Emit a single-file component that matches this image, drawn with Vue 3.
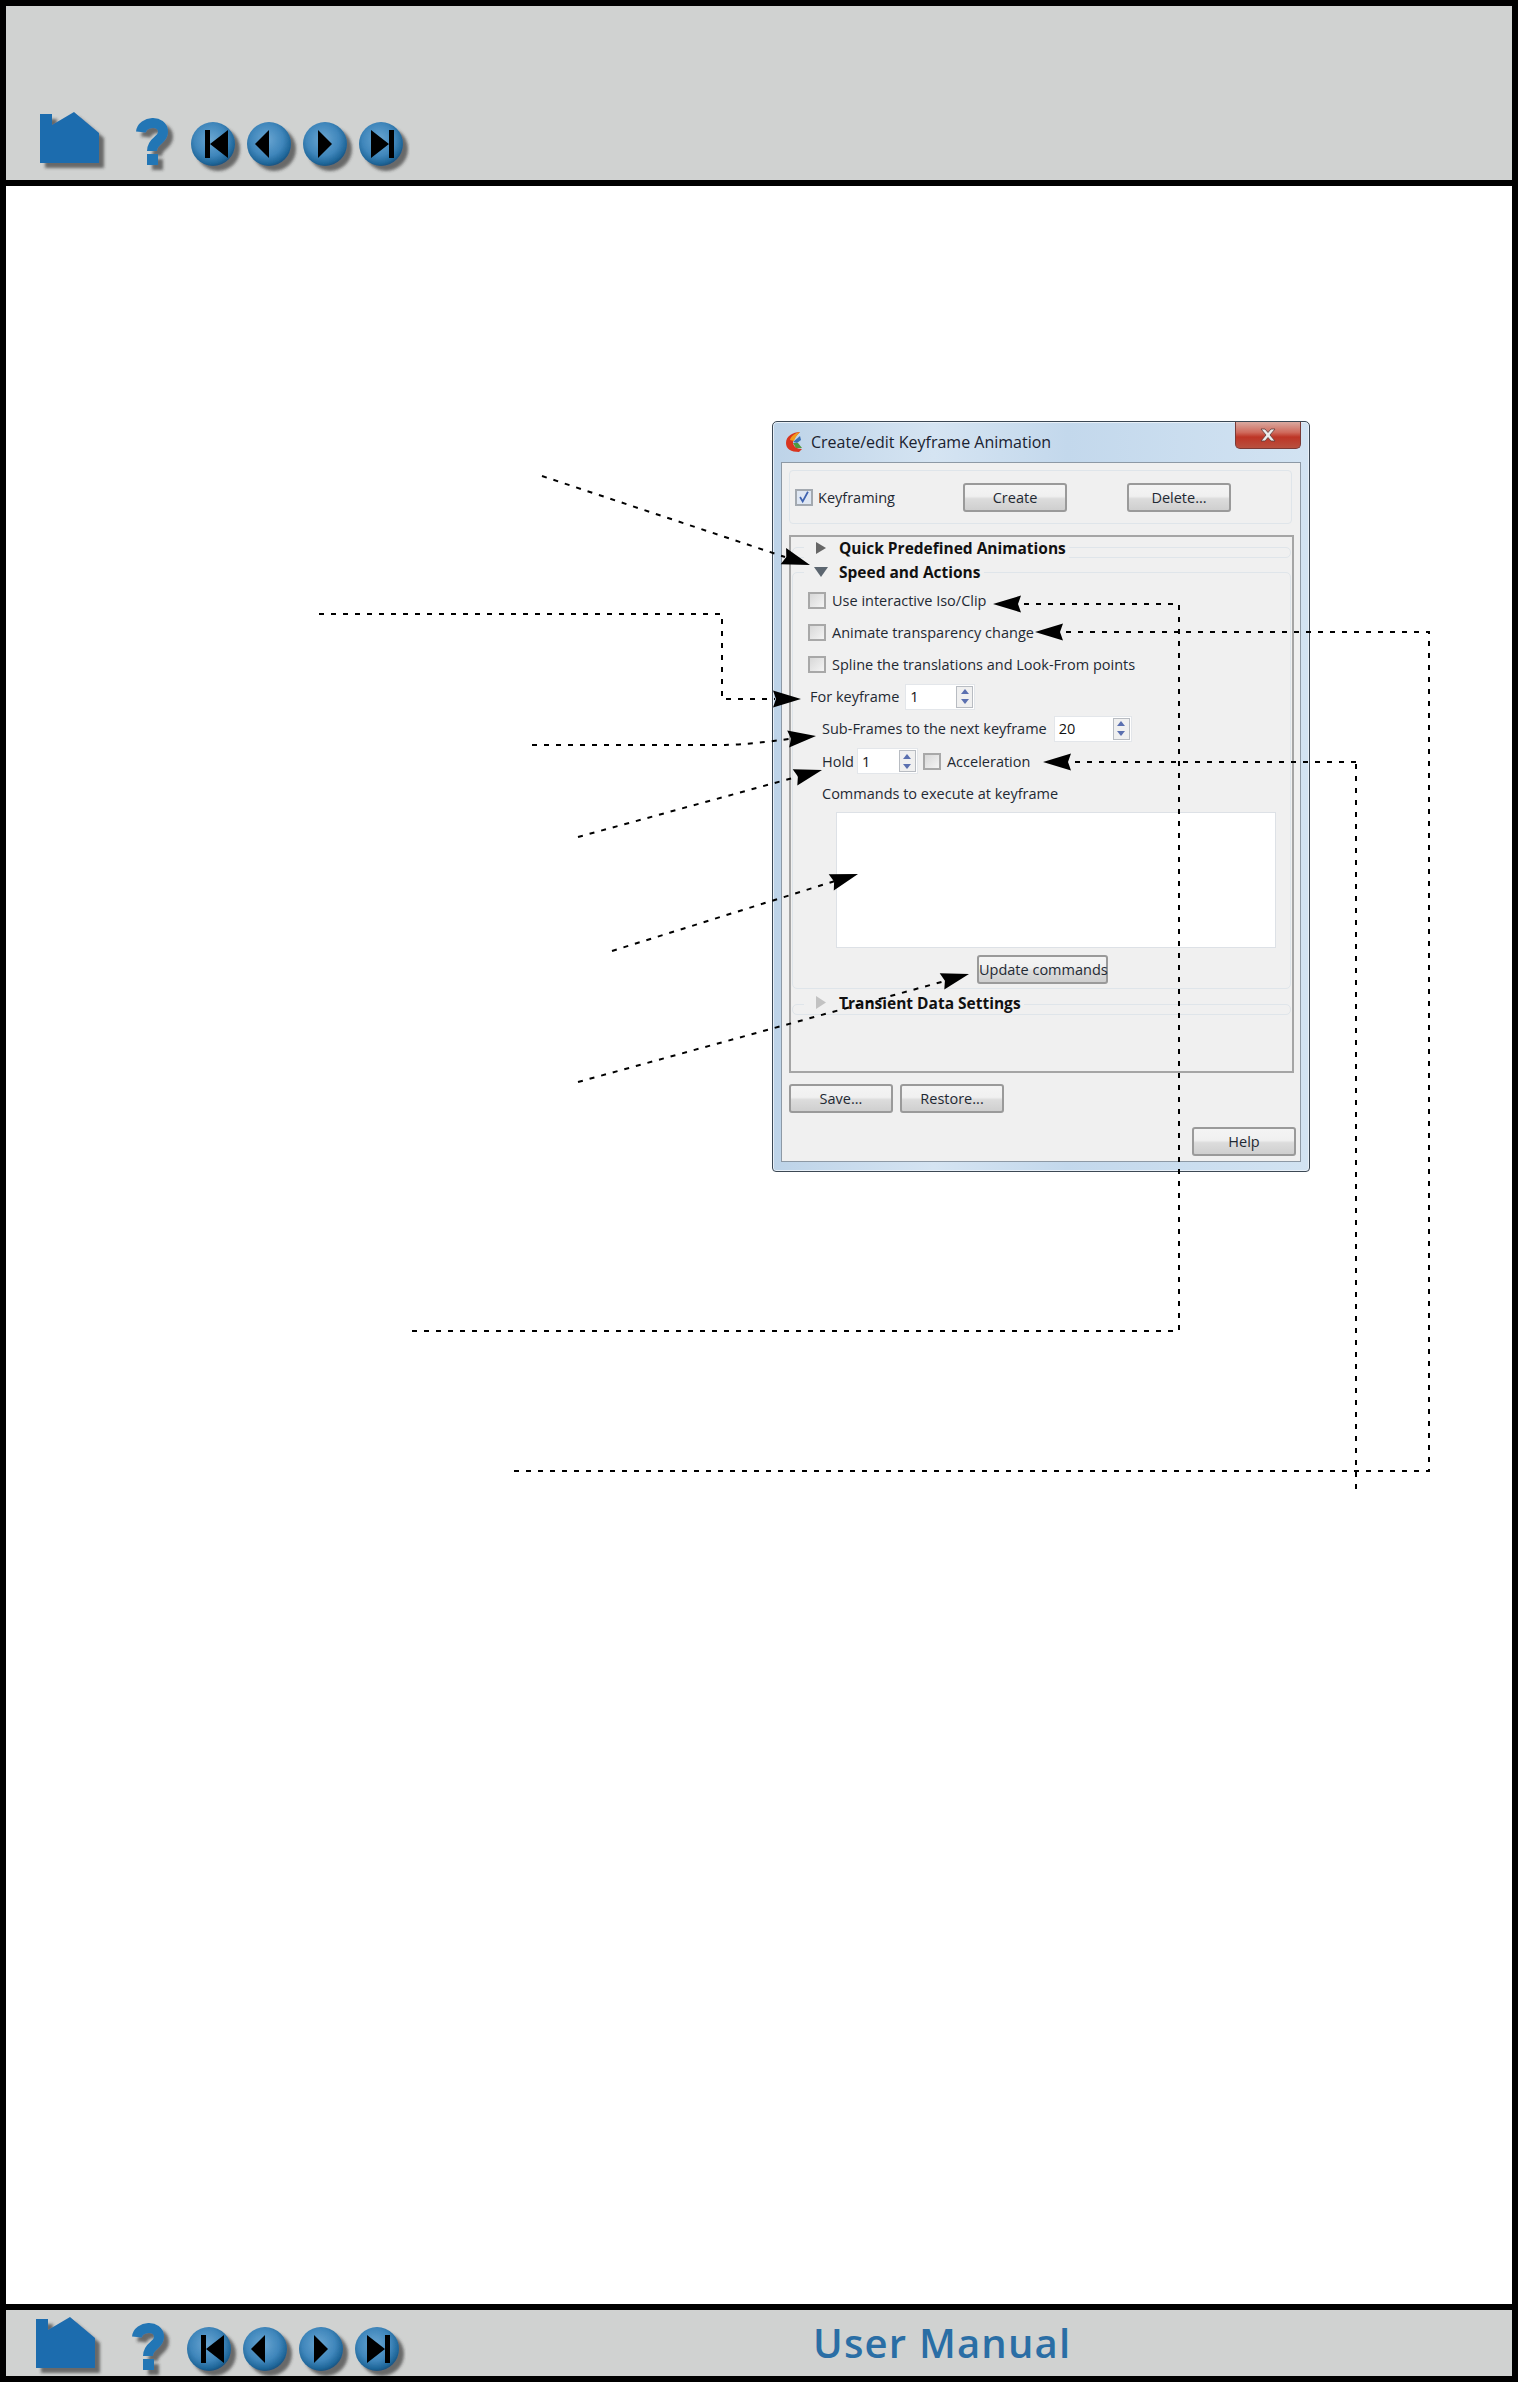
<template>
  <div class="page">
    <header class="bar top-bar">
      <svg class="nav" viewBox="0 0 376 68" width="376" height="68">
        <defs>
          <radialGradient id="ball" cx="45%" cy="40%" r="62%">
            <stop offset="0" stop-color="#6aa6d2" />
            <stop offset="0.6" stop-color="#3f86bb" />
            <stop offset="0.88" stop-color="#1f6699" />
            <stop offset="1" stop-color="#174e78" />
          </radialGradient>
          <filter id="soft" x="-20%" y="-20%" width="150%" height="150%">
            <feDropShadow dx="5" dy="5" stdDeviation="1.8" flood-color="#333" flood-opacity="0.65" />
          </filter>
        </defs>
        <g filter="url(#soft)">
          <polygon points="6,8 18,8 18,19 40,6 65,27 65,57 6,57" fill="#1f6cae" />
          <path d="M107 26C108 15 129 13 129 26C129 35 118 34 118 45" fill="none" stroke="#2476b5" stroke-width="10" />
          <rect x="113" y="48" width="11" height="11" fill="#2476b5" />
          <circle v-for="x in ballsX" :key="x" :cx="x" cy="38" r="22" fill="url(#ball)" />
        </g>
        <path d="M171 24h5v28h-5zM194 24v28l-18-14z" />
        <path d="M235 24v28l-14-14z" />
        <path d="M284 24v28l14-14z" />
        <path d="M337 24l18 14-18 14zM355 24h5v28h-5z" />
      </svg>
    </header>

    <main class="content">
      <div class="win">
        <div class="titlebar">
          <svg class="appicon" viewBox="0 0 18 22" width="18" height="22">
            <path d="M15 1C8 1 1 5 1 12c0 6 5 9 13 9l3-3C11 18 8 15 8 11c0-3 3-6 7-10z" fill="#d8351f" />
            <path d="M15 1C10 2 6 5 5 9l4 1c1-3 3-6 6-9z" fill="#ef9a1e" />
            <path d="M8 11l7-6 1 4-4 3z" fill="#3a6fb5" />
            <path d="M8 12l5 0 4 5-6 0z" fill="#4e9a3f" />
          </svg>
          <span class="wintitle">Create/edit Keyframe Animation</span>
          <div class="closebtn">
            <svg viewBox="0 0 18 14" width="18" height="14">
              <path d="M2 1h4l3 3.500 3-3.500h4l-5 6 5 6h-4l-3-3.500-3 3.500h-4l5-6z" fill="#ececec" stroke="#5e3a38" stroke-width="0.8" />
            </svg>
          </div>
        </div>

        <div class="client">
          <div class="keybox">
            <span class="check checked">
              <svg viewBox="0 0 16 16" width="14" height="14"><path d="M3.500 8l3 5 6-11" fill="none" stroke="#3f63b0" stroke-width="2" /></svg>
            </span>
            <span class="keylabel">Keyframing</span>
            <button class="btn">Create</button>
            <button class="btn delete">Delete...</button>
          </div>

          <div class="mainbox">
            <section class="group first">
              <div class="head head1">
                <svg class="tri" viewBox="0 0 14 14" width="14" height="14"><polygon points="2,1 12,7 2,13" fill="#666" /></svg>
                <b>Quick Predefined Animations</b>
              </div>
            </section>

            <section class="group open">
              <div class="head head2">
                <svg class="tri" viewBox="0 0 14 14" width="14" height="14"><polygon points="0,2 14,2 7,12" fill="#5c6670" /></svg>
                <b>Speed and Actions</b>
              </div>
              <div class="row pad-check" v-for="label in checks" :key="label">
                <span class="check"></span>
                <span class="checklabel">{{ label }}</span>
              </div>
              <div class="row pad-for">
                <span>For keyframe</span>
                <div class="spin for-spin">
                  <span class="val">1</span>
                  <span class="arrows"><i class="up"></i><i class="down"></i></span>
                </div>
              </div>
              <div class="row pad-sub">
                <span>Sub-Frames to the next keyframe</span>
                <div class="spin sub-spin">
                  <span class="val">20</span>
                  <span class="arrows"><i class="up"></i><i class="down"></i></span>
                </div>
              </div>
              <div class="row pad-sub">
                <span>Hold</span>
                <div class="spin hold-spin">
                  <span class="val">1</span>
                  <span class="arrows"><i class="up"></i><i class="down"></i></span>
                </div>
                <span class="check accel"></span>
                <span class="checklabel">Acceleration</span>
              </div>
              <div class="row pad-sub">Commands to execute at keyframe</div>
              <div class="commands"></div>
              <button class="btn update">Update commands</button>
            </section>

            <section class="group last">
              <div class="head head3">
                <svg class="tri" viewBox="0 0 14 14" width="14" height="14"><polygon points="2,0 12,6.500 2,13" fill="#c2c2c2" /></svg>
                <b>Transient Data Settings</b>
              </div>
            </section>
          </div>

          <div class="saverow">
            <button class="btn">Save...</button>
            <button class="btn">Restore...</button>
          </div>
          <div class="helprow">
            <button class="btn">Help</button>
          </div>
        </div>
      </div>
    </main>

    <footer class="bar bottom-bar">
      <svg class="nav" viewBox="0 0 376 68" width="376" height="68">
        <g filter="url(#soft)">
          <polygon points="6,8 18,8 18,19 40,6 65,27 65,57 6,57" fill="#1f6cae" />
          <path d="M107 26C108 15 129 13 129 26C129 35 118 34 118 45" fill="none" stroke="#2476b5" stroke-width="10" />
          <rect x="113" y="48" width="11" height="11" fill="#2476b5" />
          <circle v-for="x in ballsX" :key="x" :cx="x" cy="38" r="22" fill="url(#ball)" />
        </g>
        <path d="M171 24h5v28h-5zM194 24v28l-18-14z" />
        <path d="M235 24v28l-14-14z" />
        <path d="M284 24v28l14-14z" />
        <path d="M337 24l18 14-18 14zM355 24h5v28h-5z" />
      </svg>
      <span class="manual">User Manual</span>
    </footer>

    <!-- callout lines drawn over the dialog -->
    <svg class="callouts" viewBox="0 0 1518 2382" width="1518" height="2382">
      <path v-for="(a, i) in callouts" :key="i" :d="a.d" fill="none" stroke="#000" stroke-width="2" stroke-dasharray="5 7" />
      <polygon v-for="(a, i) in callouts" :key="'h' + i" :points="head(a.tip, a.from)" fill="#000" />
      <path d="M1356 1489V761" fill="none" stroke="#000" stroke-width="2" stroke-dasharray="5 7" />
    </svg>
  </div>
</template>

<script setup>
const ballsX = [179, 235, 291, 347]

const checks = ['Use interactive Iso/Clip', 'Animate transparency change', 'Spline the translations and Look-From points']

const callouts = [
  { d: 'M542 476L785 557', tip: [810, 565], from: [542, 476] },
  { d: 'M319 614H722V699H775', tip: [801, 699], from: [722, 699] },
  { d: 'M532 745H725Q755 744 795 738', tip: [816, 736], from: [770, 741] },
  { d: 'M578 837L800 776', tip: [822, 770], from: [578, 837] },
  { d: 'M612 951L835 881', tip: [858, 874], from: [612, 951] },
  { d: 'M578 1082L945 981', tip: [969, 974], from: [578, 1082] },
  { d: 'M412 1331H1179V604H1015', tip: [993, 604], from: [1179, 604] },
  { d: 'M514 1471H1429V632H1060', tip: [1035, 632], from: [1429, 632] },
  { d: 'M1356 762H1068', tip: [1043, 762], from: [1356, 762] }
]

// arrow head with a small notch at the back
function head(tip, from) {
  var dx = tip[0] - from[0]
  var dy = tip[1] - from[1]
  var len = Math.sqrt(dx * dx + dy * dy)
  var ux = dx / len
  var uy = dy / len
  var back = [tip[0] - ux * 28, tip[1] - uy * 28]
  var notch = [tip[0] - ux * 25, tip[1] - uy * 25]
  var a = [back[0] - uy * 8.5, back[1] + ux * 8.5]
  var b = [back[0] + uy * 8.5, back[1] - ux * 8.5]
  return [tip, a, notch, b].map(p => p[0].toFixed(1) + ',' + p[1].toFixed(1)).join(' ')
}
</script>

<style>
html, body {
  margin: 0;
  background: #fff;
}
</style>

<style scoped>
.page {
  position: relative;
  width: 1518px;
  height: 2382px;
  box-sizing: border-box;
  border: 6px solid #000;
  display: flex;
  flex-direction: column;
  background: #fff;
  font-family: "Open Sans", "DejaVu Sans", sans-serif;
  font-size: 14.5px;
  color: #1f2933;
  overflow: hidden;
}
.bar {
  background: #d0d2d1;
  display: flex;
  flex: none;
}
.top-bar {
  height: 180px;
  box-sizing: border-box;
  border-bottom: 6px solid #000;
  padding: 0 0 6px 28px;
  align-items: flex-end;
}
.bottom-bar {
  height: 72px;
  box-sizing: border-box;
  border-top: 6px solid #000;
  padding-left: 24px;
  align-items: flex-start;
  overflow: hidden;
}
.nav {
  flex: none;
  display: block;
}
.bottom-bar .nav {
  margin-top: 1px;
}
.manual {
  margin-left: 407px;
  align-self: center;
  font-family: "Open Sans", sans-serif;
  font-size: 40px;
  font-weight: 600;
  letter-spacing: 1.2px;
  color: #2a6ea5;
  line-height: 1;
}
.content {
  flex: 1;
  padding: 235px 0 0 766px;
}
.callouts {
  position: absolute;
  left: -6px;
  top: -6px;
  pointer-events: none;
}
.win {
  width: 538px;
  height: 751px;
  box-sizing: border-box;
  padding: 0 8px 9px;
  display: flex;
  flex-direction: column;
  border: 1px solid #3c4854;
  border-radius: 5px 5px 4px 4px;
  background: linear-gradient(90deg, #bdd3e8 0, #d5e4f2 30%, #c3d8ec 55%, #d2e3f2 100%);
  box-shadow: inset 0 0 0 1px #e8f0f8;
}
.titlebar {
  height: 40px;
  flex: none;
  display: flex;
  align-items: center;
  position: relative;
  padding-left: 4px;
}
.appicon {
  flex: none;
}
.wintitle {
  margin-left: 8px;
  font-size: 16px;
  color: #1a2230;
}
.closebtn {
  position: absolute;
  right: 0;
  top: 0;
  width: 66px;
  height: 27px;
  box-sizing: border-box;
  border: 1px solid #7a3a36;
  border-top: none;
  border-radius: 0 0 5px 5px;
  background: linear-gradient(#d9a9a0 0, #cf6a5c 40%, #bd3526 58%, #b8503f 100%);
  display: flex;
  align-items: center;
  justify-content: center;
}
.client {
  flex: 1;
  background: #f0f0f0;
  border: 1px solid #8d99a5;
  padding: 7px 5px 0 6px;
  display: flex;
  flex-direction: column;
  min-height: 0;
}
.keybox {
  height: 54px;
  flex: none;
  box-sizing: border-box;
  border: 1px solid #dfe5ea;
  border-radius: 4px;
  display: flex;
  align-items: center;
  padding-left: 5px;
  margin: 0 3px 0 1px;
}
.check {
  width: 18px;
  height: 17px;
  flex: none;
  box-sizing: border-box;
  border: 2px solid #a8a8a8;
  background: linear-gradient(135deg, #d8d8d8, #f4f4f4);
  display: inline-flex;
  align-items: center;
  justify-content: center;
}
.checked {
  background: #dfe7f3;
  border-color: #a3a9b0;
}
.keylabel {
  margin-left: 5px;
  width: 145px;
  flex: none;
}
.btn {
  font: inherit;
  color: inherit;
  height: 29px;
  width: 104px;
  flex: none;
  padding: 0;
  box-sizing: border-box;
  border: 2px solid #9a9a9a;
  border-radius: 3px;
  background: linear-gradient(#f4f4f4 0, #f0f0f0 45%, #dcdcdc 55%, #cfcfcf 100%);
  white-space: nowrap;
}
.delete {
  margin-left: 60px;
}
.mainbox {
  height: 538px;
  flex: none;
  box-sizing: border-box;
  border: 2px solid #a5a5a5;
  margin: 11px 1px 0;
  padding: 0 1px;
}
.group {
  border: 1px solid #dfe5ea;
  border-radius: 5px;
  box-sizing: border-box;
  display: flex;
  flex-direction: column;
  align-items: flex-start;
}
.first {
  height: 11px;
  margin-top: 10px;
}
.open {
  height: 417px;
  margin-top: 14px;
}
.last {
  height: 11px;
  margin-top: 15px;
}
.head {
  height: 22px;
  flex: none;
  display: flex;
  align-items: center;
  background: #f0f0f0;
  margin-left: 11px;
  padding: 0 3px 0 10px;
  color: #111;
  font-size: 15.5px;
}
.head1 {
  margin-top: -11px;
}
.head2 {
  margin-top: -12px;
  margin-bottom: 1px;
}
.head3 {
  margin-top: -13px;
}
.tri {
  flex: none;
  margin-right: 11px;
}
.row {
  height: 32.2px;
  flex: none;
  display: flex;
  align-items: center;
}
.pad-check {
  padding-left: 15px;
}
.pad-for {
  padding-left: 17px;
}
.pad-sub {
  padding-left: 29px;
}
.checklabel {
  margin-left: 6px;
}
.spin {
  height: 26px;
  box-sizing: border-box;
  background: #fff;
  border: 1px solid #e3e6ea;
  display: flex;
  align-items: center;
  justify-content: space-between;
  padding: 0 1px 0 4px;
  margin-left: 6px;
}
.for-spin {
  width: 70px;
}
.sub-spin {
  width: 78px;
  margin-left: 7px;
}
.hold-spin {
  width: 61px;
  margin-left: 3px;
}
.val {
  color: #111;
}
.arrows {
  width: 17px;
  height: 22px;
  flex: none;
  box-sizing: border-box;
  border: 1px solid #b8bcc2;
  background: #f0f0f0;
  display: flex;
  flex-direction: column;
  align-items: center;
  justify-content: space-around;
}
.arrows i {
  width: 0;
  height: 0;
  border-left: 4px solid transparent;
  border-right: 4px solid transparent;
}
.up {
  border-bottom: 5px solid #5b70b0;
}
.down {
  border-top: 5px solid #5b70b0;
}
.accel {
  margin-left: 5px;
}
.commands {
  width: 440px;
  height: 136px;
  flex: none;
  margin: 3px 0 0 43px;
  box-sizing: border-box;
  background: #fff;
  border: 1px solid #dde1e6;
}
.update {
  width: 131px;
  margin: 7px 0 0 184px;
}
.saverow {
  display: flex;
  gap: 7px;
  margin: 11px 0 0 1px;
}
.helprow {
  display: flex;
  justify-content: flex-end;
  margin-top: 14px;
  margin-right: -1px;
}
</style>
